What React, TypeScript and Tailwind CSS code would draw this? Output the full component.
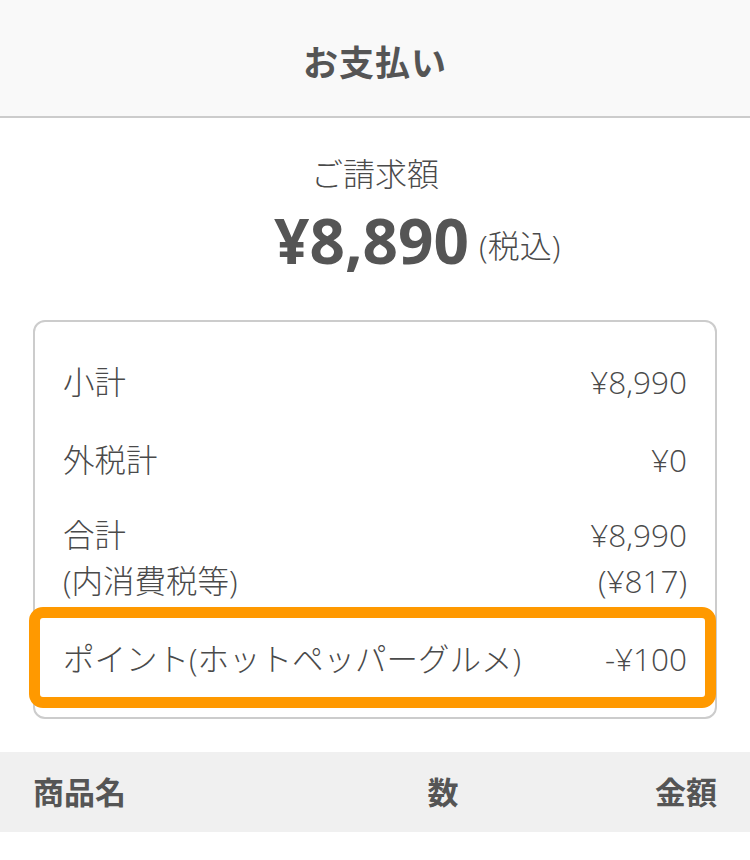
import React from "react";

const font = { fontFamily: '"Open Sans", "Noto Sans CJK JP", sans-serif' };

function Row({ label, value }: { label: React.ReactNode; value: React.ReactNode }) {
  return (
    <div className="flex justify-between px-7 text-[31.5px] leading-[46px] font-light text-[#4a4a4a]">
      <div>{label}</div>
      <div className="text-right">{value}</div>
    </div>
  );
}

export default function App() {
  return (
    <div className="w-[750px] min-h-[860px] bg-white" style={font}>
      <div className="h-[118px] bg-[#f9f9f9] border-b-2 border-[#cccccc] flex items-center justify-center pt-[10px]">
        <span className="text-[35px] font-bold text-[#555] tracking-[1px]">お支払い</span>
      </div>

      <div className="flex flex-col items-center pt-[36px]">
        <div className="text-[32px] leading-[40px] font-light text-[#4a4a4a]">ご請求額</div>
        <div className="relative mt-[8px] mr-[7px] text-[#555]">
          <span className="text-[62px] font-bold leading-[76px]">¥8,890</span>
          <span className="absolute left-full bottom-[12px] ml-[10px] text-[32px] leading-[40px] font-light whitespace-nowrap text-[#4a4a4a]">(税込)</span>
        </div>
      </div>

      <div className="mx-[33px] mt-[42px] border-2 border-[#cccccc] rounded-[12px] pt-[21px] pb-[19px]">
        <div className="py-4">
          <Row label="小計" value="¥8,990" />
        </div>
        <div className="pt-4 pb-[13px]">
          <Row label="外税計" value="¥0" />
        </div>
        <div className="py-4">
          <Row label="合計" value="¥8,990" />
          <Row label="(内消費税等)" value="(¥817)" />
        </div>
        <div className="relative py-4">
          <Row label="ポイント(ホットペッパーグルメ)" value="-¥100" />
          <div className="absolute -left-[6px] -right-[1px] -top-[13px] -bottom-[10px] border-[11px] border-[#ff9900] rounded-[14px] pointer-events-none" />
        </div>
      </div>

      <div className="mt-[33px] h-[80px] bg-[#f0f0f0] flex items-center px-[33px] text-[31px] font-bold text-[#555]">
        <div className="flex-1">商品名</div>
        <div className="w-[100px] text-center">数</div>
        <div className="w-[224px] text-right">金額</div>
      </div>
    </div>
  );
}
